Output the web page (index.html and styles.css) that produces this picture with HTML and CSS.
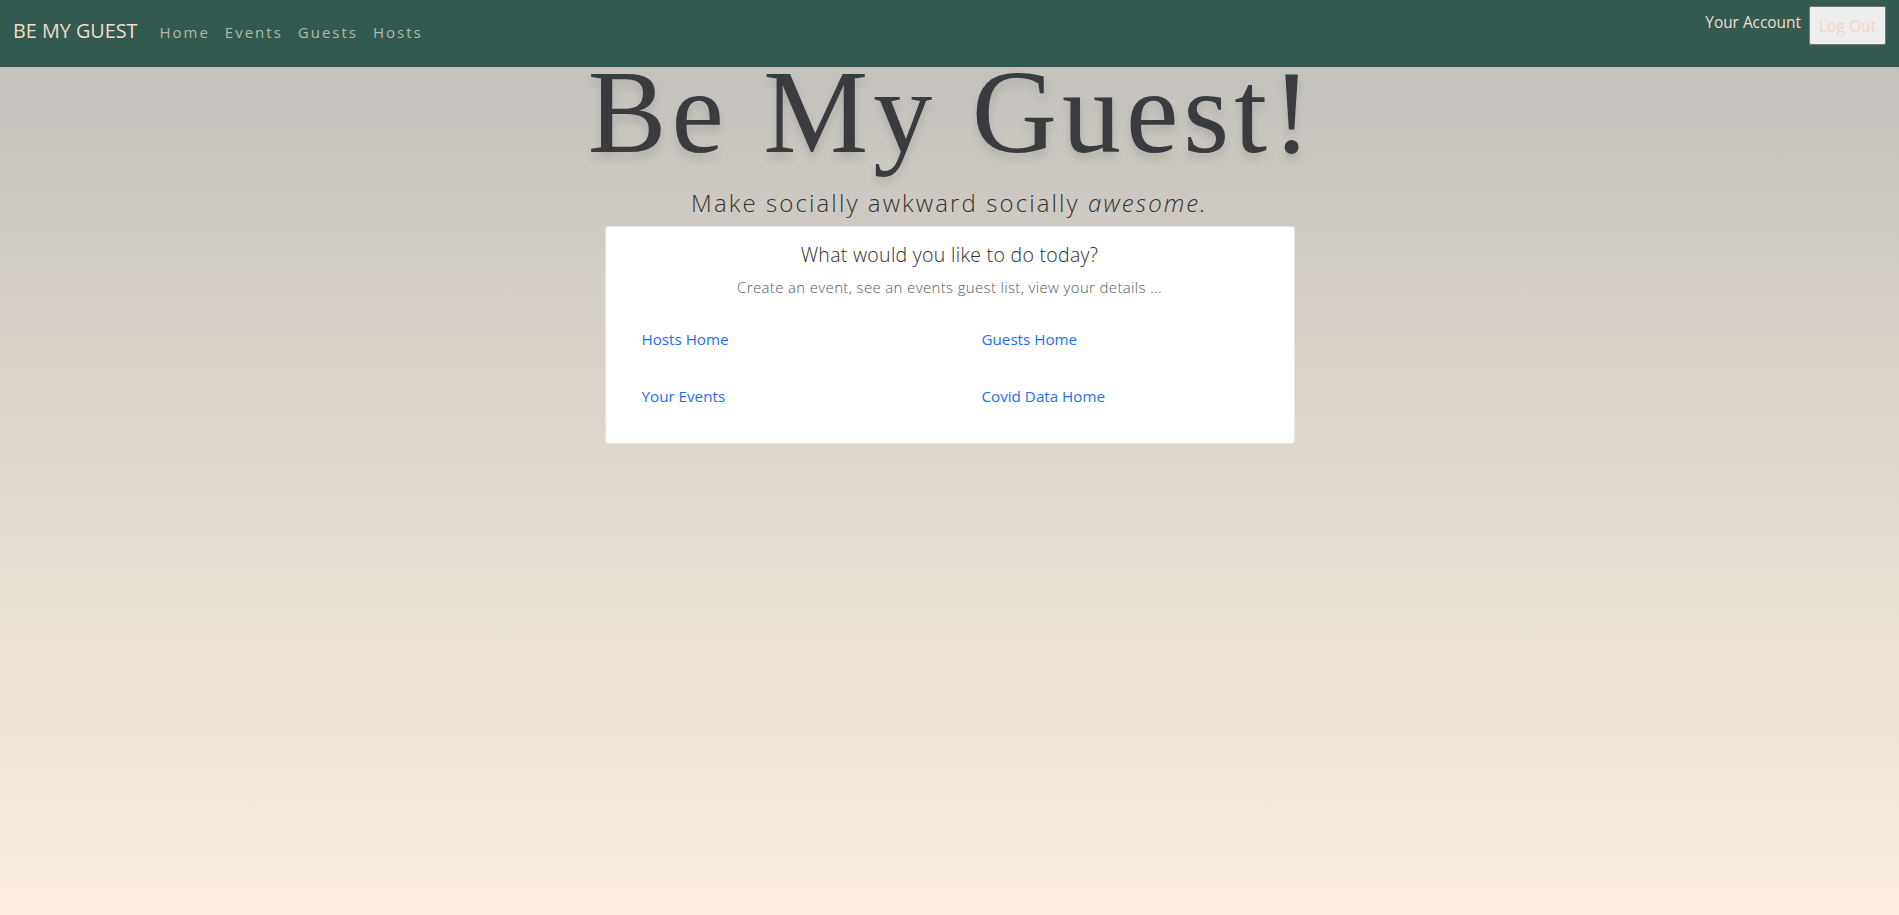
FILE: index.html
```html
<!DOCTYPE html>
<html lang="en">
<head>
<meta charset="utf-8">
<title>Be My Guest</title>
<link rel="stylesheet" href="styles.css">
</head>
<body>
<nav class="navbar">
  <div class="nav-left">
    <a class="brand" href="#">BE MY GUEST</a>
    <ul class="nav-links">
      <li><a href="#">Home</a></li>
      <li><a href="#">Events</a></li>
      <li><a href="#">Guests</a></li>
      <li><a href="#">Hosts</a></li>
    </ul>
  </div>
  <div class="nav-right">
    <a class="account" href="#">Your Account</a>
    <button class="logout" type="button">Log Out</button>
  </div>
</nav>
<main class="hero">
  <h1 class="title">Be My Guest!</h1>
  <p class="tagline">Make socially awkward socially <em>awesome.</em></p>
  <section class="card">
    <h2 class="card-title">What would you like to do today?</h2>
    <p class="card-text">Create an event, see an events guest list, view your details ...</p>
    <div class="link-grid">
      <a href="#">Hosts Home</a>
      <a href="#">Guests Home</a>
      <a href="#">Your Events</a>
      <a href="#">Covid Data Home</a>
    </div>
  </section>
</main>
</body>
</html>
```
FILE: styles.css
```css
html, body {
  margin: 0;
  padding: 0;
}
body {
  min-height: 915px;
  font-family: "Open Sans", "Liberation Sans", sans-serif;
  background: linear-gradient(to bottom, #c3c1bc 0%, #c4c2bd 7%, #dcd5cb 45%, #fcefe0 100%);
  color: #333;
}
a { text-decoration: none; }

.navbar {
  height: 67px;
  background: #335a50;
  display: flex;
  justify-content: space-between;
  align-items: flex-start;
  padding: 0 13px 0 13px;
  box-sizing: border-box;
}
.nav-left {
  display: flex;
  align-items: baseline;
  height: 100%;
  padding-top: 17px;
  box-sizing: border-box;
}
.brand {
  color: #f4dccd;
  font-size: 19.8px;
  font-weight: 400;
  margin-right: 22px;
}
.nav-links {
  display: flex;
  list-style: none;
  margin: 0;
  padding: 0;
  gap: 15px;
}
.nav-links a {
  color: #b7b5a6;
  font-size: 15px;
  letter-spacing: 2px;
}
.nav-right {
  display: flex;
  align-items: flex-start;
  margin-top: 6px;
  gap: 8px;
}
.account {
  color: #f3dccf;
  font-size: 15.4px;
  margin-top: 6px;
}
.logout {
  width: 77px;
  height: 39px;
  background: #eeeeee;
  border: 1px solid #767676;
  border-radius: 2px;
  color: #f6d2ca;
  font-family: "Open Sans", "Liberation Sans", sans-serif;
  font-size: 15.6px;
  padding: 0;
}

.hero {
  display: flex;
  flex-direction: column;
  align-items: center;
}
.title {
  margin: 0;
  padding-left: 5px;
  font-family: "Liberation Serif", "Times New Roman", serif;
  font-weight: 400;
  font-size: 118px;
  line-height: 92px;
  letter-spacing: 5px;
  color: #3a3b3f;
  text-shadow: 0 6px 8px rgba(0, 0, 0, 0.12);
}
.tagline {
  margin: 31px 0 10px;
  font-size: 24px;
  font-weight: 300;
  line-height: 26px;
  color: #333;
  letter-spacing: 2.1px;
}
.tagline em { font-style: italic; }

.card {
  width: 690px;
  box-sizing: border-box;
  background: #fff;
  border: 1px solid rgba(0, 0, 0, 0.1);
  border-radius: 4px;
  padding: 16px 0 37px;
  text-align: center;
}
.card-title {
  margin: 0;
  font-size: 19.5px;
  font-weight: 300;
  line-height: 24px;
  letter-spacing: 0.3px;
  color: #2e2e2e;
}
.card-text {
  margin: 10px 0 0;
  font-size: 15px;
  font-weight: 300;
  letter-spacing: 0.35px;
  color: #555b60;
  line-height: 20px;
}
.link-grid {
  display: grid;
  grid-template-columns: 340px 1fr;
  row-gap: 37px;
  padding: 32px 0 0 36px;
  text-align: left;
}
.link-grid a {
  color: #1f6ff5;
  font-size: 15.2px;
  font-weight: 400;
  letter-spacing: 0;
  line-height: 20px;
}
```
